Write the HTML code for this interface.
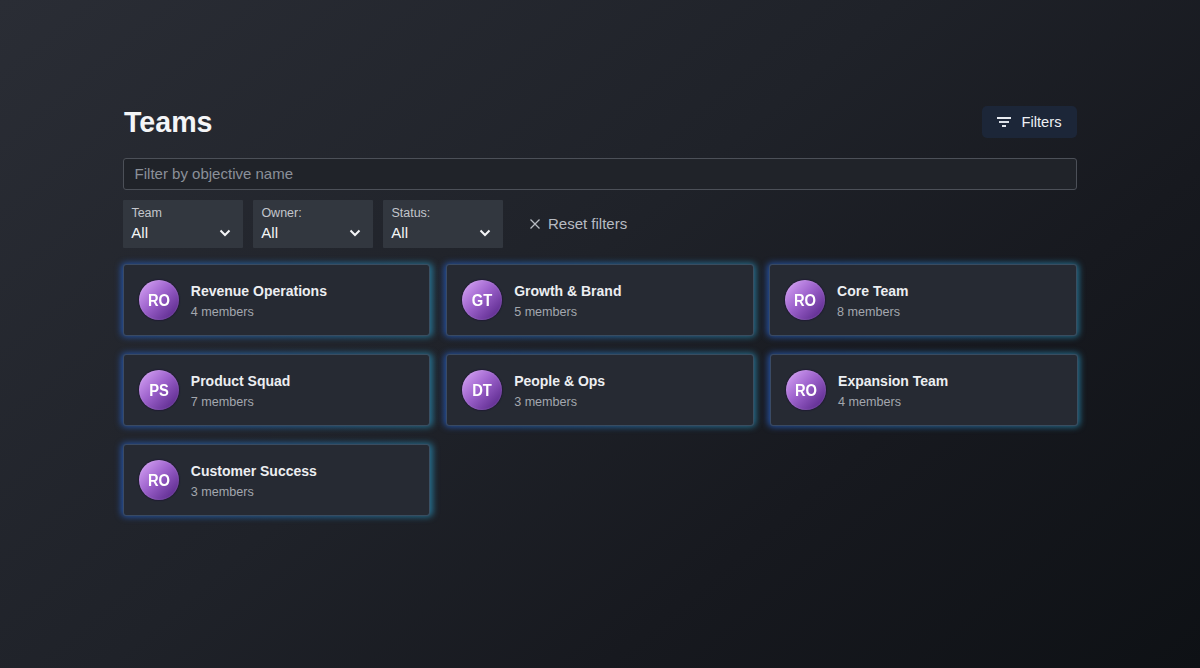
<!DOCTYPE html>
<html>
<head>
<meta charset="utf-8">
<style>
html,body{margin:0;padding:0;}
body{width:1200px;height:668px;overflow:hidden;position:relative;
  background:linear-gradient(140deg,#2a2d35 0%,#1f2229 45%,#17191f 70%,#0e1115 100%);
  font-family:"Liberation Sans",sans-serif;color:#f2f3f5;}
.abs{position:absolute;white-space:nowrap;}
.title{left:124px;top:106px;font-size:28.6px;line-height:32px;font-weight:bold;color:#f4f5f7;}
.fbtn{left:982px;top:106px;width:95px;height:32px;border-radius:5px;background:#1c2638;}
.fbtn svg{position:absolute;}
.fbtn span{position:absolute;left:39.5px;top:8.2px;font-size:14.7px;line-height:17px;color:#eef0f4;}
.search{left:123px;top:158px;width:952px;height:30px;border:1px solid #4c5058;border-radius:3px;background:#202329;}
.search span{position:absolute;left:10.6px;top:6px;font-size:15px;line-height:17px;color:#8b9099;}
.dd{top:200px;width:120px;height:48px;border-radius:1px;background:#32373f;}
.dd .lab{position:absolute;left:8.4px;top:5.8px;font-size:12.5px;line-height:14px;color:#c3c6cc;}
.dd .val{position:absolute;left:8.3px;top:24px;font-size:15px;line-height:17px;color:#f4f5f7;}
.dd svg{position:absolute;left:96px;top:29px;}
.reset{left:528px;top:215.5px;}
.reset span{position:absolute;left:20px;top:-0.8px;font-size:15px;line-height:17px;color:#b7bbc2;}
.card{width:305.33px;height:70px;border:1px solid rgba(64,76,94,0.8);border-radius:3px;background:#262a33;background-clip:padding-box;}
.glow{width:312.33px;height:74px;margin:-1px 0 0 -2.5px;border-radius:5px;filter:blur(3px);
  background:linear-gradient(90deg,#2450a0,#256e8c);}
.av{position:absolute;left:15px;top:15px;width:40px;height:40px;border-radius:50%;
  background:linear-gradient(135deg,#dcaafa 0%,#9d62cc 45%,#4e1e80 100%);box-shadow:0 0 1px 1px rgba(25,12,50,0.45),inset 0 0 1px 1px rgba(255,255,255,0.07);}
.av span{position:absolute;left:0;width:40px;top:12px;text-align:center;font-size:16px;line-height:18px;font-weight:bold;color:#fff;transform:scaleX(0.92);}
.nm{position:absolute;left:66.8px;top:18.2px;font-size:14px;line-height:16px;font-weight:bold;color:#eceef1;}
.mb{position:absolute;left:66.8px;top:40px;font-size:12.6px;line-height:14px;color:#a3a7ae;}
</style>
</head>
<body>
<div class="abs title">Teams</div>
<div class="abs fbtn"><svg width="95" height="32" style="left:0;top:0"><rect x="15" y="11" width="14" height="2" fill="#e8ebf1"/><rect x="17" y="15" width="10" height="2" fill="#dde1e9"/><rect x="20" y="19" width="4" height="2" fill="#e2e5ec"/></svg><span>Filters</span></div>
<div class="abs search"><span>Filter by objective name</span></div>
<div class="abs dd" style="left:123px"><span class="lab">Team</span><span class="val">All</span><svg width="12" height="8" viewBox="0 0 12 8"><path d="M1.5 1.5L6 6L10.5 1.5" fill="none" stroke="#f4f5f7" stroke-width="2"/></svg></div>
<div class="abs dd" style="left:253px"><span class="lab">Owner:</span><span class="val">All</span><svg width="12" height="8" viewBox="0 0 12 8"><path d="M1.5 1.5L6 6L10.5 1.5" fill="none" stroke="#f4f5f7" stroke-width="2"/></svg></div>
<div class="abs dd" style="left:383px"><span class="lab">Status:</span><span class="val">All</span><svg width="12" height="8" viewBox="0 0 12 8"><path d="M1.5 1.5L6 6L10.5 1.5" fill="none" stroke="#f4f5f7" stroke-width="2"/></svg></div>
<div class="abs reset"><svg width="14" height="14" viewBox="0 0 14 14" style="position:absolute;left:0;top:1px"><path d="M2.5 2.5L11.5 11.5M11.5 2.5L2.5 11.5" fill="none" stroke="#b7bbc2" stroke-width="1.3"/></svg><span>Reset filters</span></div>

<div class="abs glow" style="left:123px;top:264px"></div>
<div class="abs glow" style="left:446.33px;top:264px"></div>
<div class="abs glow" style="left:769.3px;top:264px"></div>
<div class="abs glow" style="left:123px;top:354px"></div>
<div class="abs glow" style="left:446.33px;top:354px"></div>
<div class="abs glow" style="left:770.3px;top:354px"></div>
<div class="abs glow" style="left:123px;top:444px"></div>

<div class="abs card" style="left:123px;top:264px"><div class="av"><span>RO</span></div><div class="nm">Revenue Operations</div><div class="mb">4 members</div></div>
<div class="abs card" style="left:446.33px;top:264px"><div class="av"><span>GT</span></div><div class="nm">Growth &amp; Brand</div><div class="mb">5 members</div></div>
<div class="abs card" style="left:769.3px;top:264px"><div class="av"><span>RO</span></div><div class="nm">Core Team</div><div class="mb">8 members</div></div>
<div class="abs card" style="left:123px;top:354px"><div class="av"><span>PS</span></div><div class="nm">Product Squad</div><div class="mb">7 members</div></div>
<div class="abs card" style="left:446.33px;top:354px"><div class="av"><span>DT</span></div><div class="nm">People &amp; Ops</div><div class="mb">3 members</div></div>
<div class="abs card" style="left:770.3px;top:354px"><div class="av"><span>RO</span></div><div class="nm">Expansion Team</div><div class="mb">4 members</div></div>
<div class="abs card" style="left:123px;top:444px"><div class="av"><span>RO</span></div><div class="nm">Customer Success</div><div class="mb">3 members</div></div>
</body>
</html>
